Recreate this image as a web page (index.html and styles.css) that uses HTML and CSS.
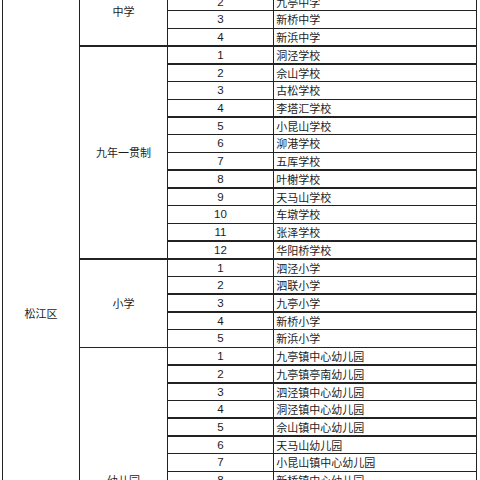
FILE: index.html
```html
<!DOCTYPE html>
<html lang="zh">
<head>
<meta charset="utf-8">
<link rel="stylesheet" href="styles.css">
</head>
<body>
<div class="table">
  <div class="district"><span>松江区</span></div>

  <div class="group g4">中学</div>
  <div class="num">1</div><div class="name">九亭中学</div>
  <div class="num">2</div><div class="name">九亭中学</div>
  <div class="num">3</div><div class="name">新桥中学</div>
  <div class="num">4</div><div class="name">新浜中学</div>

  <div class="group g12">九年一贯制</div>
  <div class="num">1</div><div class="name">洞泾学校</div>
  <div class="num">2</div><div class="name">佘山学校</div>
  <div class="num">3</div><div class="name">古松学校</div>
  <div class="num">4</div><div class="name">李塔汇学校</div>
  <div class="num">5</div><div class="name">小昆山学校</div>
  <div class="num">6</div><div class="name">泖港学校</div>
  <div class="num">7</div><div class="name">五厍学校</div>
  <div class="num">8</div><div class="name">叶榭学校</div>
  <div class="num">9</div><div class="name">天马山学校</div>
  <div class="num">10</div><div class="name">车墩学校</div>
  <div class="num">11</div><div class="name">张泽学校</div>
  <div class="num">12</div><div class="name">华阳桥学校</div>

  <div class="group g5">小学</div>
  <div class="num">1</div><div class="name">泗泾小学</div>
  <div class="num">2</div><div class="name">泗联小学</div>
  <div class="num">3</div><div class="name">九亭小学</div>
  <div class="num">4</div><div class="name">新桥小学</div>
  <div class="num">5</div><div class="name">新浜小学</div>

  <div class="group g15">幼儿园</div>
  <div class="num">1</div><div class="name">九亭镇中心幼儿园</div>
  <div class="num">2</div><div class="name">九亭镇亭南幼儿园</div>
  <div class="num">3</div><div class="name">泗泾镇中心幼儿园</div>
  <div class="num">4</div><div class="name">洞泾镇中心幼儿园</div>
  <div class="num">5</div><div class="name">佘山镇中心幼儿园</div>
  <div class="num">6</div><div class="name">天马山幼儿园</div>
  <div class="num">7</div><div class="name">小昆山镇中心幼儿园</div>
  <div class="num">8</div><div class="name">新桥镇中心幼儿园</div>
  <div class="num">9</div><div class="name">新浜镇中心幼儿园</div>
  <div class="num">10</div><div class="name">叶榭镇中心幼儿园</div>
  <div class="num">11</div><div class="name">车墩镇中心幼儿园</div>
  <div class="num">12</div><div class="name">石湖荡镇中心幼儿园</div>
  <div class="num">13</div><div class="name">泖港镇中心幼儿园</div>
  <div class="num">14</div><div class="name">五厍镇中心幼儿园</div>
  <div class="num">15</div><div class="name">张泽幼儿园</div>
</div>
</body>
</html>
```

FILE: styles.css
```css
html, body {
  margin: 0;
  padding: 0;
  background: #ffffff;
  overflow: hidden;
  width: 480px;
  height: 480px;
}

body {
  font-family: "Liberation Sans", "Noto Sans CJK SC", sans-serif;
  font-size: 11px;
  color: #1c1c1c;
}

.table {
  display: grid;
  grid-template-columns: 75.5px 86.5px 104.5px 201.5px;
  grid-auto-rows: 16.23px;
  gap: 1.5px;
  padding: 1.5px;
  width: 475.5px;
  box-sizing: border-box;
  margin-left: 1.75px;
  margin-top: -25.51px;
  background: #222222;
}

.table > div {
  background: #ffffff;
  line-height: 16.23px;
  white-space: nowrap;
  overflow: hidden;
}

.district {
  grid-column: 1;
  grid-row: 1 / span 36;
  text-align: center;
  font-family: "Noto Sans CJK SC", sans-serif;
}

.district span {
  display: block;
  margin-top: 329px;
  line-height: 16px;
}

.group {
  grid-column: 2;
  display: flex;
  align-items: center;
  justify-content: center;
  font-family: "Noto Sans CJK SC", sans-serif;
}

.g4 { grid-row: span 4; }
.g12 { grid-row: span 12; }
.g5 { grid-row: span 5; }
.g15 { grid-row: span 15; }

.num {
  grid-column: 3;
  text-align: center;
  font-size: 11.5px;
}

.name {
  grid-column: 4;
  padding-left: 2px;
  font-family: "Noto Sans CJK SC", sans-serif;
}
```
